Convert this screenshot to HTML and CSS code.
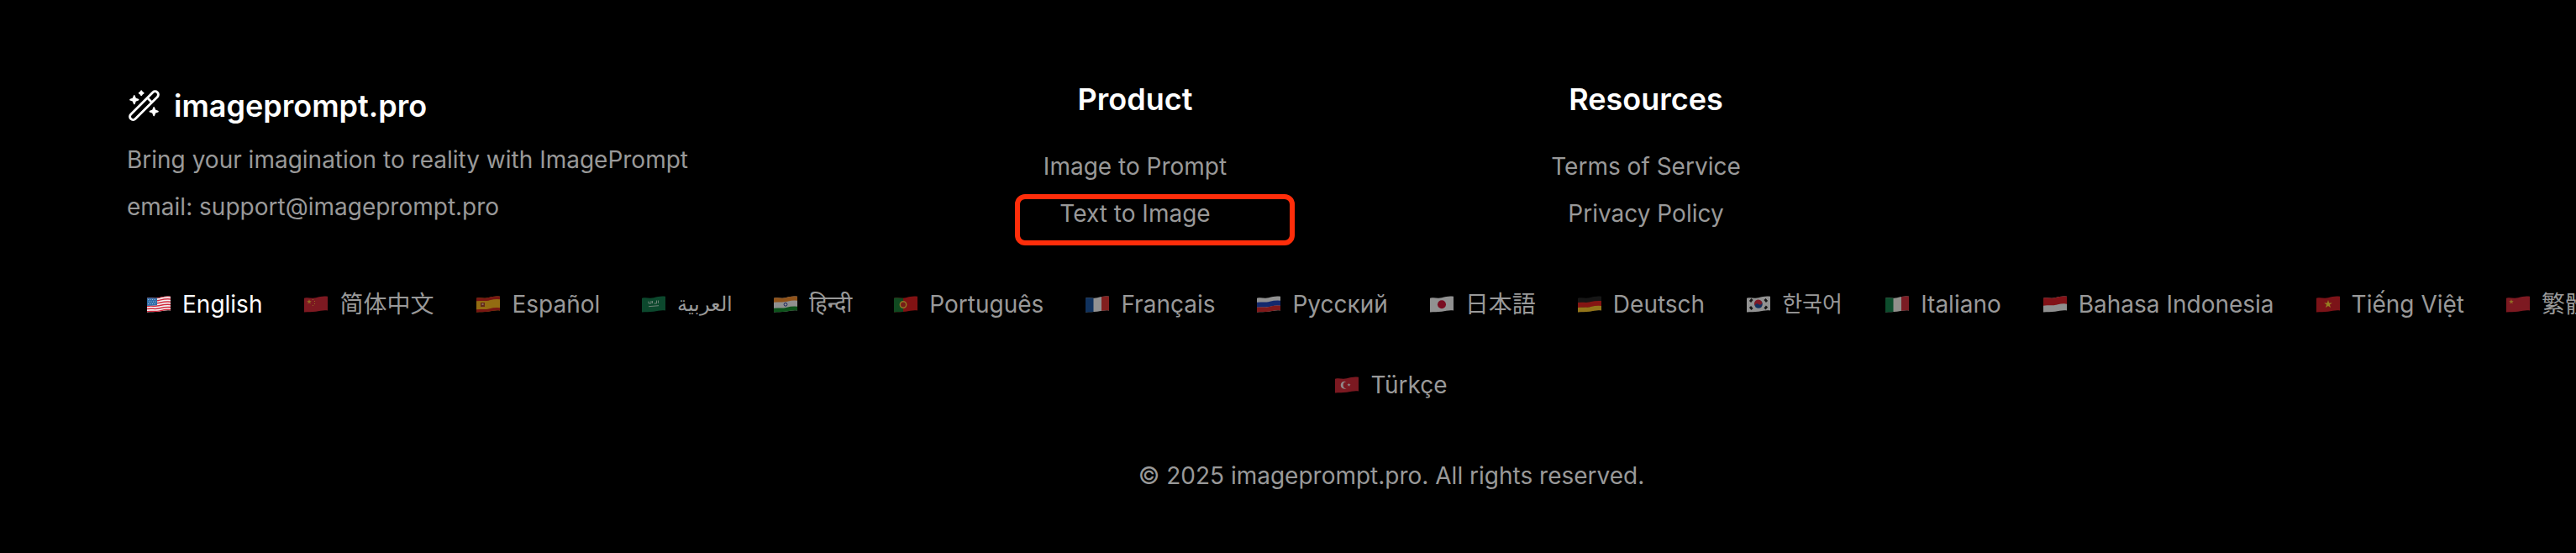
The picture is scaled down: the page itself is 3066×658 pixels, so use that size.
FILE: index.html
```
<!DOCTYPE html>
<html lang="en">
<head>
  <meta charset="UTF-8">
  <title>imageprompt.pro</title>
  <link rel="stylesheet" href="styles.css">
</head>
<body>
  <!-- shared flag shapes -->
  <svg class="defs" width="0" height="0">
    <defs>
      <clipPath id="wave"><path d="M0 2.8C5 1.6 9 3.4 14 2.2S23-.2 28 .8V17.4C23 16.6 19 18 14 18.8S5 18.8 0 19.6Z"/></clipPath>
      <path id="band" d="M-1 3C5 1.6 9 3.4 14 2.2S23-.2 29 1"/>
      <path id="star" d="M0-5 1.2-1.6H4.8L1.9.6 3 4 0 1.9-3 4-1.9.6-4.8-1.6H-1.2Z"/>
    </defs>
  </svg>

  <footer class="footer">
    <div class="top">
      <div class="brand">
        <div class="logo">
          <svg width="40" height="40" viewBox="0 0 40 40" fill="none" stroke="#fff" stroke-width="2.8" stroke-linejoin="round">
            <rect x="-3.8" y="-22.3" width="7.6" height="44.6" rx="3.6" transform="translate(20.5 19.7) rotate(45)"/>
            <path d="M24.5 10.5l5.2 5.2"/>
            <path d="M8.8 8l1.3 3.4 3.4 1.3-3.4 1.3-1.3 3.4-1.3-3.4-3.4-1.3 3.4-1.3zM32.2 22l1.3 3.4 3.4 1.3-3.4 1.3-1.3 3.4-1.3-3.4-3.4-1.3 3.4-1.3zM17.2 2.2l1 1.5 1.5 1-1.5 1-1 1.5-1-1.5-1.5-1 1.5-1z" fill="#fff" stroke-width="1.8"/>
          </svg>
          <span>imageprompt.pro</span>
        </div>
        <p>Bring your imagination to reality with ImagePrompt</p>
        <p>email: support@imageprompt.pro</p>
      </div>
      <div class="col">
        <h3>Product</h3>
        <a>Image to Prompt</a>
        <a class="marked">Text to Image</a>
      </div>
      <div class="col">
        <h3>Resources</h3>
        <a>Terms of Service</a>
        <a>Privacy Policy</a>
      </div>
    </div>

    <div class="langs">
      <a class="lang active"><svg class="flag" viewBox="0 0 28 20"><g clip-path="url(#wave)"><path fill="#f4f4f4" d="M0 0h28v20H0z"/><g fill="none" stroke="#d3283c" stroke-width="1.5"><use href="#band"/><use href="#band" y="3.2"/><use href="#band" y="6.4"/><use href="#band" y="9.6"/><use href="#band" y="12.8"/><use href="#band" y="16"/></g><path fill="#2f6da8" d="M0 0h12v11.2L0 12z"/><path stroke="#b9d2ea" stroke-width=".8" stroke-dasharray="1 1.5" d="M1 4.5h10M2 7h9M1 9.5h10"/></g></svg><span>English</span></a>
      <a class="lang zh"><svg class="flag" viewBox="0 0 28 20"><g clip-path="url(#wave)"><path fill="#d02a38" d="M0 0h28v20H0z"/><use href="#star" fill="#f5b83c" transform="translate(6 7) scale(.6)"/><path fill="#f5b83c" d="M10 4h1v1h-1zM12 6h1v1h-1zM12 9h1v1h-1zM10 11h1v1h-1z"/></g></svg><span>简体中文</span></a>
      <a class="lang"><svg class="flag" viewBox="0 0 28 20"><g clip-path="url(#wave)"><path fill="#f5b51e" d="M0 0h28v20H0z"/><g fill="none" stroke="#c8261e" stroke-width="5"><use href="#band" y="1"/><use href="#band" y="16"/></g><path fill="#a5452a" d="M5 8h5v5H5z"/><path fill="#f0b69a" d="M6.5 9h2v2h-2z"/></g></svg><span>Español</span></a>
      <a class="lang ar"><svg class="flag" viewBox="0 0 28 20"><g clip-path="url(#wave)"><path fill="#14784c" d="M0 0h28v20H0z"/><path stroke="#b7d9c7" stroke-width="1" fill="none" d="M8 6.5v2.5h3V6m1.5 3V6m2 3h3V5.5m2 0v3.2M8 12.7l12-1"/></g></svg><span>العربية</span></a>
      <a class="lang hi"><svg class="flag" viewBox="0 0 28 20"><g clip-path="url(#wave)"><path fill="#f0f0f0" d="M0 0h28v20H0z"/><use href="#band" y="2" fill="none" stroke="#f08a2c" stroke-width="6"/><use href="#band" y="15" fill="none" stroke="#178b2d" stroke-width="6"/><circle cx="14" cy="10.3" r="1.9" fill="none" stroke="#303a98"/></g></svg><span>हिन्दी</span></a>
      <a class="lang"><svg class="flag" viewBox="0 0 28 20"><g clip-path="url(#wave)"><path fill="#d81e20" d="M0 0h28v20H0z"/><path fill="#1c7a36" d="M0 0h11v20H0z"/><circle cx="11" cy="10.5" r="3.7" fill="#c62f27" stroke="#edc33d" stroke-width="1.5"/></g></svg><span>Português</span></a>
      <a class="lang"><svg class="flag" viewBox="0 0 28 20"><g clip-path="url(#wave)"><path fill="#f2f2f2" d="M0 0h28v20H0z"/><path fill="#1b549d" d="M0 0h9.5v20H0z"/><path fill="#d93532" d="M19 0h9v20h-9z"/></g></svg><span>Français</span></a>
      <a class="lang"><svg class="flag" viewBox="0 0 28 20"><g clip-path="url(#wave)"><path fill="#f2f2f2" d="M0 0h28v20H0z"/><use href="#band" y="8" fill="none" stroke="#2145b6" stroke-width="6"/><use href="#band" y="14" fill="none" stroke="#d52a2c" stroke-width="6"/></g></svg><span>Русский</span></a>
      <a class="lang ja"><svg class="flag" viewBox="0 0 28 20"><g clip-path="url(#wave)"><path fill="#f2f2f2" d="M0 0h28v20H0z"/><circle cx="14" cy="10.3" r="5" fill="#cc1638"/></g></svg><span>日本語</span></a>
      <a class="lang"><svg class="flag" viewBox="0 0 28 20"><g clip-path="url(#wave)"><path fill="#262626" d="M0 0h28v20H0z"/><use href="#band" y="8.3" fill="none" stroke="#dc2420" stroke-width="6"/><use href="#band" y="14.2" fill="none" stroke="#f6c42c" stroke-width="6"/></g></svg><span>Deutsch</span></a>
      <a class="lang ko"><svg class="flag" viewBox="0 0 28 20"><g clip-path="url(#wave)"><path fill="#f2f2f2" d="M0 0h28v20H0z"/><circle cx="14" cy="10" r="4.8" fill="#24509c"/><path fill="#d22b40" d="M9.5 11.5A4.8 4.8 0 1 1 18.5 8.5Q16.5 12 14 10T9.5 11.5"/><path stroke="#222" stroke-width="2.8" d="M4 7l2.5-3M4 13l2.5 3M21.5 4L24 7M21.5 15.5L24 12.5"/></g></svg><span>한국어</span></a>
      <a class="lang"><svg class="flag" viewBox="0 0 28 20"><g clip-path="url(#wave)"><path fill="#f0efe8" d="M0 0h28v20H0z"/><path fill="#17814c" d="M0 0h9.5v20H0z"/><path fill="#ce303c" d="M19 0h9v20h-9z"/></g></svg><span>Italiano</span></a>
      <a class="lang"><svg class="flag" viewBox="0 0 28 20"><g clip-path="url(#wave)"><path fill="#efefef" d="M0 0h28v20H0z"/><use href="#band" y="4" fill="none" stroke="#d91f27" stroke-width="9.5"/></g></svg><span>Bahasa Indonesia</span></a>
      <a class="lang"><svg class="flag" viewBox="0 0 28 20"><g clip-path="url(#wave)"><path fill="#cf2029" d="M0 0h28v20H0z"/><use href="#star" fill="#fbd43a" transform="translate(14 10)"/></g></svg><span>Tiếng Việt</span></a>
      <a class="lang"><svg class="flag" viewBox="0 0 28 20"><g clip-path="url(#wave)"><path fill="#d02a38" d="M0 0h28v20H0z"/><use href="#star" fill="#f5b83c" transform="translate(6 7) scale(.6)"/></g></svg><span>繁體中文</span></a>
      <a class="lang"><svg class="flag" viewBox="0 0 28 20"><g clip-path="url(#wave)"><path fill="#ce2b37" d="M0 0h28v20H0z"/><path fill="#f2e6e6" d="M13.5 6.3a4.5 4.5 0 1 0 0 7.8 3.6 3.6 0 1 1 0-7.8"/><use href="#star" fill="#f2e6e6" transform="translate(16.5 10) scale(.45)"/></g></svg><span>Türkçe</span></a>
    </div>

    <p class="copy">© 2025 imageprompt.pro. All rights reserved.</p>
  </footer>
</body>
</html>
```
FILE: styles.css
```
* { box-sizing: border-box; }
body {
  margin: 0;
  height: 658px;
  overflow: hidden;
  background: #000;
  color: #999;
  font-family: Inter, "Noto Sans CJK SC", "Noto Sans", sans-serif;
  font-size: 28px;
  line-height: 40px;
}
p, h3 { margin: 0; }
.defs { position: absolute; }
.footer {
  width: 3012px;
  margin-left: 150px;
  padding-top: 98px;
}
.top {
  display: grid;
  grid-template-columns: 881px 576px 576px;
  gap: 32px;
  height: 216px;
}
.brand { padding-left: 1px; }
.logo {
  display: flex;
  align-items: center;
  gap: 16px;
  height: 56px;
  margin-bottom: 16px;
  color: #fff;
  font-size: 36px;
  font-weight: 600;
}
.brand p { margin-bottom: 16px; }
.col {
  display: flex;
  flex-direction: column;
  align-items: center;
  gap: 16px;
}
h3 {
  margin-bottom: 24px;
  color: #fff;
  font-size: 36px;
  font-weight: 600;
}
.marked { position: relative; }
/* red highlight around the link */
.marked::after {
  content: "";
  box-sizing: border-box;
  position: absolute;
  left: -53px;
  top: -3px;
  width: 333px;
  height: 61px;
  border: 6px solid #ff2d0a;
  border-radius: 12px;
}
.langs {
  display: flex;
  flex-wrap: wrap;
  justify-content: center;
  column-gap: 2px;
}
.lang {
  display: flex;
  align-items: center;
  gap: 14px;
  height: 96px;
  padding: 0 24px;
  white-space: nowrap;
}
.flag {
  width: 28px;
  height: 20px;
  opacity: .6;
}
.active { color: #fff; }
.active .flag { opacity: 1; }
.zh span { width: 113px; }
.ar span { width: 65px; font-size: 24px; }
.hi span { width: 51px; font-size: 27px; }
.ja { font-family: Inter, "Noto Sans CJK JP", sans-serif; }
.ko { font-family: Inter, "Noto Sans CJK KR", sans-serif; }
.ko span { width: 73px; font-size: 26px; }
.copy {
  margin-top: 40px;
  text-align: center;
}
```
